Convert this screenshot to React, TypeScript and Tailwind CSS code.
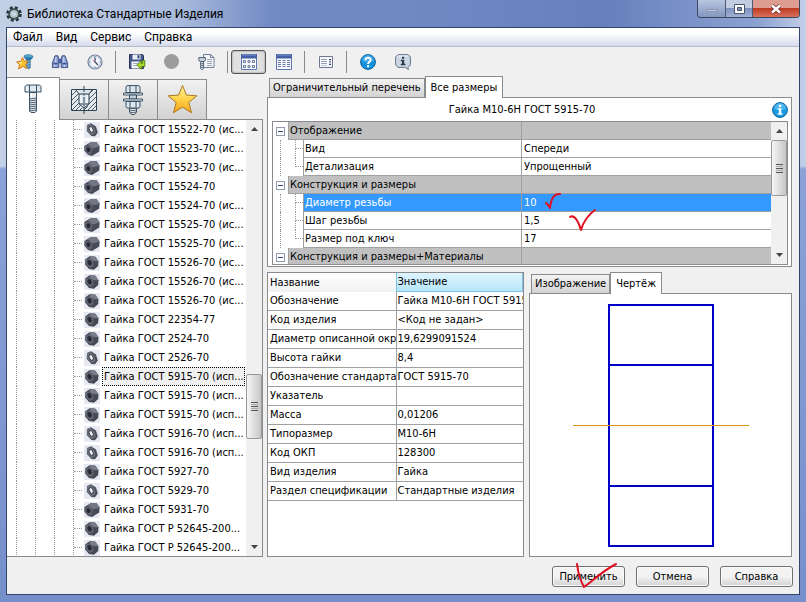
import { useState } from "react";
import type { ReactNode } from "react";
import clsx from "clsx";

type NutKind = "thin" | "normal" | "thick";

const NUTS: { name: string; kind: NutKind }[] = [
  { name: "Гайка ГОСТ 15522-70 (ис...", kind: "thin" },
  { name: "Гайка ГОСТ 15523-70 (ис...", kind: "thick" },
  { name: "Гайка ГОСТ 15523-70 (ис...", kind: "thick" },
  { name: "Гайка ГОСТ 15524-70", kind: "thick" },
  { name: "Гайка ГОСТ 15524-70 (ис...", kind: "thick" },
  { name: "Гайка ГОСТ 15525-70 (ис...", kind: "thick" },
  { name: "Гайка ГОСТ 15525-70 (ис...", kind: "thick" },
  { name: "Гайка ГОСТ 15526-70 (ис...", kind: "normal" },
  { name: "Гайка ГОСТ 15526-70 (ис...", kind: "normal" },
  { name: "Гайка ГОСТ 15526-70 (ис...", kind: "normal" },
  { name: "Гайка ГОСТ 22354-77", kind: "normal" },
  { name: "Гайка ГОСТ 2524-70", kind: "normal" },
  { name: "Гайка ГОСТ 2526-70", kind: "thin" },
  { name: "Гайка ГОСТ 5915-70 (исп...", kind: "normal" },
  { name: "Гайка ГОСТ 5915-70 (исп...", kind: "normal" },
  { name: "Гайка ГОСТ 5915-70 (исп...", kind: "normal" },
  { name: "Гайка ГОСТ 5916-70 (исп...", kind: "thin" },
  { name: "Гайка ГОСТ 5916-70 (исп...", kind: "thin" },
  { name: "Гайка ГОСТ 5927-70", kind: "normal" },
  { name: "Гайка ГОСТ 5929-70", kind: "thin" },
  { name: "Гайка ГОСТ 5931-70", kind: "thick" },
  { name: "Гайка ГОСТ Р 52645-200...", kind: "normal" },
  { name: "Гайка ГОСТ Р 52645-200...", kind: "normal" },
];

const DETAILS = [
  ["Обозначение", "Гайка М10-6Н ГОСТ 5915"],
  ["Код изделия", "<Код не задан>"],
  ["Диаметр описанной окру", "19,6299091524"],
  ["Высота гайки", "8,4"],
  ["Обозначение стандарта", "ГОСТ 5915-70"],
  ["Указатель", ""],
  ["Масса", "0,01206"],
  ["Типоразмер", "М10-6Н"],
  ["Код ОКП", "128300"],
  ["Вид изделия", "Гайка"],
  ["Раздел спецификации", "Стандартные изделия"],
];

type Prop = { name: string; value?: string; group?: boolean; last?: boolean };

const PROPS: Prop[] = [
  { name: "Отображение", group: true },
  { name: "Вид", value: "Спереди" },
  { name: "Детализация", value: "Упрощенный", last: true },
  { name: "Конструкция и размеры", group: true },
  { name: "Диаметр резьбы", value: "10" },
  { name: "Шаг резьбы", value: "1,5" },
  { name: "Размер под ключ", value: "17", last: true },
  { name: "Конструкция и размеры+Материалы", group: true },
];

function GearIcon() {
  return (
    <svg width="16" height="16" viewBox="0 0 16 16">
      <circle cx="8" cy="8" r="6.4" fill="none" stroke="#263238" strokeWidth="2.8" strokeDasharray="2.9 2.13" />
      <circle cx="8" cy="8" r="4.8" fill="#e8f0f0" stroke="#3d4f55" strokeWidth="2" />
      <circle cx="8" cy="8" r="2.8" fill="#c9d6ea" stroke="#8b9da3" strokeWidth="0.6" />
    </svg>
  );
}

function NutIcon({ kind }: { kind: NutKind }) {
  return (
    <svg width="16" height="16" viewBox="0 0 16 16" className="shrink-0 bg-[#e6e8f2]">
      {kind === "thin" && (
        <>
          <path d="M3 3 7 1.2 12 4.6 13.8 10.4 11 14.2 7.4 14 2.8 9Z" fill="#4a4c58" />
          <path d="M3 3.2 6.6 2 10.6 5.6 11.4 11 8 13.2 3.4 9Z" fill="#6c6f7d" />
          <ellipse cx="7.2" cy="7.5" rx="1.9" ry="3" transform="rotate(-25 7.2 7.5)" fill="#eef0f6" stroke="#454752" />
        </>
      )}
      {kind === "normal" && (
        <>
          <path d="M1.4 4.2 6 1 11.4 1.8 14.4 6.2 14.2 11 10 14.8 5 14 1.2 9.6Z" fill="#464854" />
          <path d="M6 1 11.4 1.8 14.4 6.2 9.8 6.2 5.5 3.4Z" fill="#787b88" />
          <path d="M1.6 4.6 5.5 3.4 9.2 6.6 9.4 11 6 13 1.8 9.2Z" fill="#646774" />
          <ellipse cx="5.6" cy="7.8" rx="2.1" ry="2.7" transform="rotate(-25 5.6 7.8)" fill="#292a35" />
        </>
      )}
      {kind === "thick" && (
        <>
          <path d="M.4 5 7 1 12.4 1 15.6 5.4 15.2 10.6 8 15 3.8 13.8 .4 9.8Z" fill="#484a56" />
          <path d="M3.6 3 7.6 1 12.4 1 15.6 5.4 9 7.6 5.4 4.4Z" fill="#747784" />
          <path d="M.8 5.4 5.4 4.6 8.6 8 7.6 12.8 4 13.2 .8 9.4Z" fill="#60636f" />
          <ellipse cx="4.4" cy="8.6" rx="1.9" ry="2.4" transform="rotate(-25 4.4 8.6)" fill="#262732" />
        </>
      )}
    </svg>
  );
}

function StarBoltIcon() {
  return (
    <svg width="18" height="18" viewBox="0 0 18 18">
      <path d="M8 3.2C8 1.4 16.6 1 17 3.6L15.4 6.2H9.6Z" fill="#2c86b8" stroke="#1e5f8c" strokeWidth=".6" />
      <path d="M9 3h7" stroke="#7cc5e6" strokeWidth="1" />
      <path d="M10.6 6h3.8v8.4l-1.8 1.6-2-1.8Z" fill="#3d7fae" stroke="#285a80" strokeWidth=".5" />
      <path d="m10.6 9 3.8-1M10.6 11.4l3.8-1M10.6 13.6l3.8-1" stroke="#b9dcf0" strokeWidth=".7" />
      <path d="m6.6 4.4 1.7 3.8 4.1.1-3 2.8 1.3 4.4-3.9-2.1L2.6 16l.9-4.4L.6 8.9l4.2-.6Z" fill="#ffc52e" stroke="#c8701a" strokeWidth=".9" />
      <path d="M6.5 6.6 5.5 9l-2.5.6 2 1.8Z" fill="#fff0a0" />
    </svg>
  );
}

function BinocularsIcon() {
  return (
    <svg width="18" height="16" viewBox="0 0 18 16">
      <path d="M4 1.8h3l.8 3.4v8.4H1.4V9.2Z" fill="#8b9cd0" stroke="#40538f" />
      <path d="M14 1.8h-3l-.8 3.4v8.4h6.4V9.2Z" fill="#8b9cd0" stroke="#40538f" />
      <path d="M7.8 5h2.4v4H7.8Z" fill="#5367a5" stroke="#40538f" strokeWidth=".6" />
      <path d="M2.4 9.6h4.2M11.4 9.6h4.2" stroke="#40538f" strokeWidth="1.2" />
      <path d="M3.6 11v2M4.8 3.2v5M12.8 3.2v5M13.4 11v2" stroke="#dde4f8" />
    </svg>
  );
}

function ClockIcon() {
  return (
    <svg width="16" height="16" viewBox="0 0 16 16">
      <circle cx="8" cy="8" r="7" fill="#fff" stroke="#6d7f9b" strokeWidth="1.2" />
      <circle cx="8" cy="8" r="5.6" fill="#f2f6fc" stroke="#b4c0d2" strokeWidth="1" />
      <path d="M8 3.4V8l3 3" fill="none" stroke="#31435f" strokeWidth="1.2" />
      <path d="M8 8 5.6 6" stroke="#d04848" strokeWidth=".8" />
      <path d="M8 2.6v1M8 12.4v1M2.6 8h1M12.4 8h1" stroke="#6d7f9b" />
    </svg>
  );
}

function SaveIcon() {
  return (
    <svg width="18" height="18" viewBox="0 0 18 18">
      <path d="M1.5 1.5h13l1 1v13h-14Z" fill="#46598c" stroke="#26345f" />
      <path d="M4.5 1.5h8v5h-8Z" fill="#e8edf6" />
      <path d="M9.6 2.2h1.8v3.2H9.6Z" fill="#26345f" />
      <path d="M3.5 8.5h10v7h-10Z" fill="#f8fafd" />
      <path d="M5 10.5h5M5 12.5h4" stroke="#9aa8c4" />
      <path d="M16.8 7.4v6.2h-3.6v2.6L8.8 12l4.4-4.2v2.6h1.2v-3Z" fill="#a9d92a" stroke="#4d7d0d" strokeWidth=".9" />
    </svg>
  );
}

function ReportIcon() {
  return (
    <svg width="18" height="18" viewBox="0 0 18 18">
      <path d="M5.5 1.5h7l3.5 3v10H5.5Z" fill="#f4f6fa" stroke="#70809a" />
      <path d="M12.5 1.5v3H16" fill="none" stroke="#70809a" />
      <path d="M9 6.5h5M9 8.5h5M9 10.5h5M9 12.5h5" stroke="#97a4b8" />
      <path d="M.8 4.5h6.6v3l-1.2 1H2l-1.2-1Z" fill="#c5cdd8" stroke="#48566a" strokeWidth=".9" />
      <path d="M2.6 8.5h3v7l-1.5 1.4-1.5-1.4Z" fill="#dce1e8" stroke="#48566a" strokeWidth=".8" />
      <path d="m2.6 11 3-1M2.6 13l3-1M2.6 15l3-1" stroke="#48566a" strokeWidth=".8" />
    </svg>
  );
}

function WindowIcon({ boxes }: { boxes?: boolean }) {
  return (
    <svg width="16" height="16" viewBox="0 0 16 16">
      <path d="M.5.5h15v15H.5Z" fill="#f6f9fe" stroke="#6078b0" />
      <path d="M0 0h16v4.5H0Z" fill="#4560a4" />
      <path d="M1 1h14" stroke="#7e95cc" />
      {boxes ? (
        <path
          d="M2.5 6.5h2v2h-2zM7 6.5h2v2H7zM11.5 6.5h2v2h-2zM2.5 11.5h2v2h-2zM7 11.5h2v2H7zM11.5 11.5h2v2h-2z"
          fill="#fff"
          stroke="#5a6b94"
          strokeWidth=".9"
        />
      ) : (
        <path d="M2 6.5h12M2 8.5h12M2 10.5h12M2 12.5h12" stroke="#6b7da8" strokeDasharray="3 1.5" />
      )}
    </svg>
  );
}

function CardIcon() {
  return (
    <svg width="14" height="12" viewBox="0 0 14 12">
      <path d="M.5.5h13v11H.5Z" fill="#f8f9fc" stroke="#6d7890" />
      <path d="M2 3.5h6M2 5.5h6M2 7.5h6" stroke="#98a2b6" />
      <path d="M10 3h2v1.2h-2zM10 5.4h2v1.2h-2zM10 7.8h2V9h-2z" fill="#3b4a72" />
      <path d="M2 9.5h6" stroke="#c2c8d4" />
    </svg>
  );
}

function HelpIcon() {
  return (
    <svg width="16" height="16" viewBox="0 0 16 16">
      <circle cx="8" cy="8" r="7.4" fill="#1592dc" stroke="#0a5f9e" strokeWidth="1" />
      <path d="M2 7a6 6 0 0 1 12 0q-6 2.6-12 0Z" fill="#58bdf0" opacity=".6" />
      <path d="M5.6 6.2C5.6 3 10.6 3 10.5 6.1 10.4 7.8 8.1 7.9 8.1 10" fill="none" stroke="#fff" strokeWidth="2" />
      <path d="M7 11.2h2.2v2H7Z" fill="#fff" />
    </svg>
  );
}

function InfoBubbleIcon() {
  return (
    <svg width="16" height="16" viewBox="0 0 16 16">
      <path d="M3 .6h10L15.4 3v8L13 13.4h0l.4 2.2-3-2.2H3L.6 11V3Z" fill="#ccd6e2" stroke="#66778c" />
      <path d="M2 3.4 3.6 2h9" fill="none" stroke="#f4f7fa" />
      <path d="M7 2.8h2.2v2H7ZM5.8 5.8h3.4v4h1.2v1.4H5.8V9.8H7V7.2H5.8Z" fill="#2d3a4c" />
    </svg>
  );
}

function InfoIcon() {
  return (
    <svg width="16" height="16" viewBox="0 0 16 16">
      <circle cx="8" cy="8" r="7.4" fill="#1a9be4" stroke="#0b5f98" strokeWidth="1" />
      <path d="M2 7a6 6 0 0 1 12 0q-6 2.6-12 0Z" fill="#6cc8f4" opacity=".6" />
      <path d="M6.9 2.8h2.4v2.2H6.9ZM5.8 6.2h3.5v5h1.2v1.6H5.7v-1.6h1.2V7.8H5.8Z" fill="#fff" />
    </svg>
  );
}

function BoltIcon() {
  return (
    <svg width="18" height="30" viewBox="0 0 18 30">
      <path d="M1 2.5 2.5 1h13L17 2.5V8H1Z" fill="#dfe7ef" stroke="#3b5062" />
      <path d="M5.5 1v7M12.5 1v7" stroke="#3b5062" />
      <path d="M5.5 8.5h7V27L11 28.5H7L5.5 27Z" fill="#e9eef3" stroke="#3b5062" />
      <path d="m5.5 15 7-1M5.5 17l7-1M5.5 19l7-1M5.5 21l7-1M5.5 23l7-1M5.5 25l7-1M5.5 27l7-1" stroke="#4d5f6e" />
      <path d="M7.5 9v4M3 3v4" stroke="#fff" />
    </svg>
  );
}

function HoleIcon() {
  return (
    <svg width="26" height="28" viewBox="0 0 26 28">
      <path d="M.5 3.5h25v21H.5Z" fill="#e6ebef" />
      <path
        d="m1 9 5-5M1 14l7-7M1 19l7-7M1 24l7-7M5 24l4-4M9 24l2-2M17 24l8-8M21 24l4-4M18 18l7-7M18 13l7-7M13 24l4-4M19 7l3-3"
        fill="none"
        stroke="#455868"
      />
      <path d="M.5 3.5h25v21H.5Z" fill="none" stroke="#2f4250" />
      <path d="M4.5 3.5h17L18 8v10l-5 4-5-4V8Z" fill="#dde6ee" stroke="#2f4250" />
      <path d="M8 8h10M8 18h10" stroke="#2f4250" />
      <path d="M10 9v8M16 9v8" stroke="#fff" />
      <path d="M13 0v28" stroke="#2f4250" strokeDasharray="6 1.5 2 1.5" />
    </svg>
  );
}

function BoltNutIcon() {
  return (
    <svg width="22" height="30" viewBox="0 0 22 30">
      <path d="M7.5 13h7v14l-2 2.5h-3l-2-2.5Z" fill="#e9eef3" stroke="#3b5062" />
      <path d="m7.5 24 7-1M7.5 26l7-1M8 28l6-1" stroke="#4d5f6e" />
      <path d="M4 2l1-1.4h12L18 2v5.5H4Z" fill="#dfe7ef" stroke="#3b5062" />
      <path d="M8 .6v7M14 .6v7M8 13v3M14 13v3" stroke="#3b5062" />
      <path d="M1.5 8h19v2h-19Z" fill="#f7f9fb" stroke="#3b5062" />
      <path d="M7.5 10h7v4h-7Z" fill="#c4d0da" stroke="#3b5062" />
      <path d="M1.5 14h19v2h-19Z" fill="#f7f9fb" stroke="#3b5062" />
      <path d="M4 16.5h14v5L17 23H5l-1-1.5Z" fill="#dfe7ef" stroke="#3b5062" />
      <path d="M8 17v5.5M14 17v5.5" stroke="#3b5062" />
    </svg>
  );
}

function StarIcon() {
  return (
    <svg width="31" height="31" viewBox="0 0 32 32">
      <defs>
        <linearGradient id="gold" x1="0" y1="0" x2="0" y2="1">
          <stop offset="0" stopColor="#fff3a0" />
          <stop offset=".5" stopColor="#ffd34a" />
          <stop offset="1" stopColor="#f5a21a" />
        </linearGradient>
      </defs>
      <path d="m16 1.5 4 9.9 10.8.8-8.3 6.8 2.8 10.7L16 23.9l-9.3 5.8 2.8-10.7-8.3-6.8 10.800-.8Z" fill="url(#gold)" stroke="#a8761c" />
    </svg>
  );
}

function Tick({ d, className, width, height }: { d: string; className: string; width: number; height: number }) {
  return (
    <svg width={width} height={height} viewBox={`0 0 ${width} ${height}`} className={clsx("absolute pointer-events-none z-10", className)}>
      <path d={d} fill="none" stroke="#e01020" strokeWidth="2" strokeLinecap="round" strokeLinejoin="round" />
    </svg>
  );
}

function ArrowButton({ up }: { up?: boolean }) {
  return (
    <button type="button" aria-label={up ? "Вверх" : "Вниз"} className="flex h-[18px] shrink-0 items-center justify-center">
      <svg width="7" height="4" viewBox="0 0 7 4">
        <path d={up ? "M0 4h7L3.5 0Z" : "M0 0h7L3.5 4Z"} fill="#444" />
      </svg>
    </button>
  );
}

function ScrollBar({ before, size, after }: { before: string; size: string; after: string }) {
  return (
    <div className="flex w-4 shrink-0 flex-col bg-[#f0f0f0]">
      <ArrowButton up />
      <div className={before} />
      <div
        className={clsx(
          "flex shrink-0 flex-col items-center justify-center gap-px rounded-[2px] border border-[#999] bg-linear-to-r from-[#f6f6f6] to-[#c6c6c8]",
          size,
        )}
      >
        <span className="h-px w-[7px] bg-[#555]" />
        <span className="h-px w-[7px] bg-[#aaa]" />
        <span className="h-px w-[7px] bg-[#555]" />
        <span className="h-px w-[7px] bg-[#aaa]" />
        <span className="h-px w-[7px] bg-[#555]" />
      </div>
      <div className={after} />
      <ArrowButton />
    </div>
  );
}

function ToolButton({ label, pressed, children }: { label: string; pressed?: boolean; children: ReactNode }) {
  return (
    <button
      type="button"
      aria-label={label}
      aria-pressed={pressed}
      className={clsx(
        "flex h-6 w-[35px] items-center justify-center rounded-[3px]",
        pressed && "border border-[#555] bg-[#e0e0e0] shadow-[inset_0_0_2px_#777]",
      )}
    >
      {children}
    </button>
  );
}

function Divider() {
  return <span className="mx-[3px] h-[22px] w-px bg-[#8a8a8a]" />;
}

function IconTab({ label, active, onClick, children }: { label: string; active: boolean; onClick: () => void; children: ReactNode }) {
  return (
    <button
      type="button"
      role="tab"
      aria-label={label}
      aria-selected={active}
      onClick={onClick}
      className={clsx(
        "flex items-center justify-center border-t border-r border-[#8a8a8f]",
        active ? "h-[43px] w-[53px] bg-white" : "mb-px h-10 w-[49px] bg-linear-to-b from-[#f2f2f2] to-[#d2d2d2]",
      )}
    >
      {children}
    </button>
  );
}

function TextTab({ active, onClick, children }: { active: boolean; onClick: () => void; children: ReactNode }) {
  return (
    <button
      type="button"
      role="tab"
      aria-selected={active}
      onClick={onClick}
      className={clsx(
        "border border-b-0 border-[#8a8a8f]",
        active ? "relative -mb-px h-[22px] bg-white px-[5px]" : "h-[19px] bg-linear-to-b from-[#f3f3f3] to-[#d3d3d3] px-[3px]",
      )}
    >
      {children}
    </button>
  );
}

function DialogButton({ children }: { children: ReactNode }) {
  return (
    <button
      type="button"
      className="relative h-[21px] w-[73px] rounded-[3px] border border-[#707070] bg-linear-to-b from-[#f3f3f3] from-50% to-[#d2d2d2] shadow-[inset_0_0_0_1px_#fafafa]"
    >
      {children}
    </button>
  );
}

function TitleBar() {
  return (
    <header className="flex h-[27px] shrink-0 items-start justify-between">
      <div className="flex h-[27px] items-center gap-[5px]">
        <GearIcon />
        <h1 className="font-['Roboto','Noto_Sans',sans-serif] text-[12px]">Библиотека Стандартные Изделия</h1>
      </div>
      <div className="flex h-[18px] overflow-hidden rounded-b-[4px] border border-t-0 border-[#3b4660]">
        <button type="button" aria-label="Свернуть" className="flex w-7 items-center justify-center border-r border-[#4d5a78] bg-linear-to-b from-[#b9c6e0] to-[#8396c0]">
          <span className="mt-1 h-[3px] w-3 border border-[#8794b0] bg-[#c4cde0]" />
        </button>
        <button type="button" aria-label="Развернуть" className="flex w-[27px] items-center justify-center border-r border-[#4d5a78] bg-linear-to-b from-[#c2cde4] from-45% via-[#7f93bf] via-50% to-[#9fb0d6]">
          <svg width="11" height="10" viewBox="0 0 11 10">
            <path d="M.5.5h10v9H.5Z" fill="#fff" stroke="#485268" />
            <path d="M3.5 3.5h4v3h-4Z" fill="#7d90b8" stroke="#485268" />
          </svg>
        </button>
        <button type="button" aria-label="Закрыть" className="flex w-[46px] items-center justify-center bg-linear-to-b from-[#dd9d90] from-45% via-[#bf3a22] via-50% to-[#d8705a]">
          <svg width="12" height="10" viewBox="0 0 12 10">
            <path d="m2 1.5 8 7M10 1.5l-8 7" stroke="#5a3030" strokeWidth="4" />
            <path d="m2 1.5 8 7M10 1.5l-8 7" stroke="#fff" strokeWidth="2.5" />
          </svg>
        </button>
      </div>
    </header>
  );
}

function NutTree() {
  const [selected, setSelected] = useState(13);

  return (
    <div className="flex min-h-0 flex-1 border border-l-0 border-[#8a8a8f] bg-white">
      <ul role="tree" className="min-w-0 flex-1 overflow-hidden">
        {NUTS.map((nut, i) => (
          <li
            key={i}
            role="treeitem"
            aria-selected={i === selected}
            onClick={() => setSelected(i)}
            className="flex h-[19px] items-center pl-[9px]"
          >
            <span className="h-full w-[19px] shrink-0 border-l border-dotted border-[#999]" />
            <span className="h-full w-[19px] shrink-0 border-l border-dotted border-[#999]" />
            <span className="h-full w-[19px] shrink-0 border-l border-dotted border-[#999]" />
            <span className="flex h-full w-[11px] shrink-0 items-center border-l border-dotted border-[#999]">
              <span className="w-2 border-t border-dotted border-[#999]" />
            </span>
            <NutIcon kind={nut.kind} />
            <span
              className={clsx(
                "ml-0.5 flex h-full items-center border px-px whitespace-nowrap",
                i === selected ? "w-[143px] border-dotted border-black bg-[#f0f0f0]" : "border-transparent",
              )}
            >
              {nut.name}
            </span>
          </li>
        ))}
      </ul>
      <ScrollBar before="flex-[236]" size="h-[65px]" after="flex-[99]" />
    </div>
  );
}

function PropertyGrid() {
  const [selected, setSelected] = useState(4);

  return (
    <div className="flex h-36 overflow-hidden border border-[#8a8a8f]">
      <div className="min-w-0 flex-1 overflow-hidden">
        <table className="w-full table-fixed border-separate border-spacing-0">
          <colgroup>
            <col className="w-[15px]" />
            <col className="w-[15px]" />
            <col className="w-[218px]" />
            <col />
          </colgroup>
          <tbody>
            {PROPS.map((prop, i) =>
              prop.group ? (
                <tr key={i} className="h-[18px]">
                  <td className="h-[18px] p-0">
                    <button type="button" aria-label="Свернуть группу" className="ml-[3px] flex size-[9px] items-center justify-center border border-[#8f9bb0] bg-white">
                      <span className="h-px w-[5px] bg-[#33447a]" />
                    </button>
                  </td>
                  <th colSpan={2} className="border-b border-l border-[#a0a0a0] bg-[#c0c0c0] p-0 pl-px text-left font-normal whitespace-nowrap">
                    {prop.name}
                  </th>
                  <td className="border-b border-l border-[#a0a0a0] bg-[#c0c0c0] p-0" />
                </tr>
              ) : (
                <tr key={i} onClick={() => setSelected(i)} className={clsx("h-[18px]", i === selected && "text-white")}>
                  <td className="h-[18px] p-0">
                    <div className="ml-[7px] h-[18px] border-l border-dotted border-[#999]" />
                  </td>
                  <td className="p-0">
                    <div className="ml-[7px] h-[18px]">
                      <div className="h-[9px] border-b border-l border-dotted border-[#999]" />
                      {!prop.last && <div className="h-[9px] border-l border-dotted border-[#999]" />}
                    </div>
                  </td>
                  <th
                    className={clsx(
                      "border-b border-l border-[#a0a0a0] p-0 pl-px text-left font-normal whitespace-nowrap",
                      i === selected && "bg-[#3399ff]",
                    )}
                  >
                    {prop.name}
                  </th>
                  <td className={clsx("relative border-b border-l border-[#a0a0a0] p-0 pl-0.5", i === selected && "bg-[#3399ff]")}>
                    {prop.value}
                    {prop.value === "10" && <Tick width={18} height={20} className="-top-0.5 left-[22px]" d="M16 2C10 1 7 7 6 16 5 14 4 12 2 11" />}
                    {prop.value === "1,5" && <Tick width={30} height={26} className="-top-1 left-[46px]" d="M2 9C7 6 11 15 13 22 15 14 21 6 27 2" />}
                  </td>
                </tr>
              ),
            )}
          </tbody>
        </table>
      </div>
      <ScrollBar before="h-0" size="h-[56px]" after="flex-1" />
    </div>
  );
}

function SizesPanel() {
  const [tab, setTab] = useState(1);

  return (
    <section>
      <div role="tablist" className="flex items-end px-0.5">
        <TextTab active={tab === 0} onClick={() => setTab(0)}>Ограничительный перечень</TextTab>
        <TextTab active={tab === 1} onClick={() => setTab(1)}>Все размеры</TextTab>
      </div>
      <div className="border border-[#8a8a8f] bg-white pr-[3px] pb-px pl-1">
        <div className="flex h-[23px] items-center">
          <p className="flex-1 text-center">Гайка М10-6Н ГОСТ 5915-70</p>
          <button type="button" aria-label="Сведения">
            <InfoIcon />
          </button>
        </div>
        <PropertyGrid />
      </div>
    </section>
  );
}

function DetailsTable() {
  return (
    <div className="w-[257px] shrink-0 overflow-hidden border border-[#8a8a8f] bg-white">
      <table className="w-full table-fixed border-separate border-spacing-0">
        <thead>
          <tr className="h-[19px]">
            <th className="h-[19px] bg-linear-to-b from-white to-[#f0f1f3] p-0 pl-0.5 text-left font-normal">Название</th>
            <th className="border border-t-0 border-[#7cc4e4] bg-linear-to-b from-[#dff5fe] to-[#b6e6fb] p-0 pl-px text-left font-normal">Значение</th>
          </tr>
        </thead>
        <tbody>
          {DETAILS.map(([name, value]) => (
            <tr key={name} className="h-[19px]">
              <td className="h-[19px] overflow-hidden border-b border-[#a0a0a0] p-0 pl-0.5 whitespace-nowrap">{name}</td>
              <td className="overflow-hidden border-b border-l border-[#a0a0a0] p-0 pl-px whitespace-nowrap">{value}</td>
            </tr>
          ))}
        </tbody>
      </table>
    </div>
  );
}

function DrawingPanel() {
  const [tab, setTab] = useState(1);

  return (
    <section className="flex flex-1 flex-col">
      <div role="tablist" className="flex items-end px-0.5">
        <TextTab active={tab === 0} onClick={() => setTab(0)}>Изображение</TextTab>
        <TextTab active={tab === 1} onClick={() => setTab(1)}>Чертёж</TextTab>
      </div>
      <div className="flex flex-1 items-center justify-center border border-[#8a8a8f] bg-white">
        <svg width="176" height="243" viewBox="0 0 176 243" shapeRendering="crispEdges">
          <path d="M36 1h104v241H36ZM36 61h104M36 182h104" fill="none" stroke="#0000c8" strokeWidth="2" />
          <path d="M0 121h176v1H0Z" fill="#d8940c" />
        </svg>
      </div>
    </section>
  );
}

export default function App() {
  const [category, setCategory] = useState(0);

  return (
    <div className="flex h-screen flex-col overflow-hidden bg-[linear-gradient(to_bottom,transparent_166px,#8aa2d8_169px,#7690cc_100%),linear-gradient(to_right,#c3d0e6_0%,#a9bbdc_22%,#7189c4_34%,#6f88c4_55%,#6680be_75%,#8ba1d0_94%,#c3cfe8_100%)] px-1.5 pb-[7px] font-['DejaVu_Sans_Condensed','Noto_Sans',sans-serif] text-[11px] leading-[14px] text-black">
      <TitleBar />
      <main className="flex min-h-0 flex-1 flex-col border border-[#33456b] bg-[#f0f0f0]">
        <nav className="flex h-[19px] shrink-0 items-center gap-[13px] border-b border-[#b4bccc] bg-linear-to-b from-white from-30% to-[#d5daeb] px-1.5 font-['Roboto','Noto_Sans',sans-serif] text-[12px]">
          <button type="button">Файл</button>
          <button type="button">Вид</button>
          <button type="button">Сервис</button>
          <button type="button">Справка</button>
        </nav>
        <div role="toolbar" className="flex h-[29px] shrink-0 items-center">
          <ToolButton label="В избранное"><StarBoltIcon /></ToolButton>
          <ToolButton label="Поиск"><BinocularsIcon /></ToolButton>
          <ToolButton label="Журнал"><ClockIcon /></ToolButton>
          <Divider />
          <ToolButton label="Сохранить"><SaveIcon /></ToolButton>
          <ToolButton label="Остановить">
            <span className="size-[15px] rounded-full bg-[#9c9c9c]" />
          </ToolButton>
          <ToolButton label="Отчёт"><ReportIcon /></ToolButton>
          <Divider />
          <ToolButton label="Значки" pressed><WindowIcon boxes /></ToolButton>
          <ToolButton label="Список"><WindowIcon /></ToolButton>
          <Divider />
          <ToolButton label="Карточка"><CardIcon /></ToolButton>
          <Divider />
          <ToolButton label="Справка"><HelpIcon /></ToolButton>
          <ToolButton label="О программе"><InfoBubbleIcon /></ToolButton>
        </div>
        <div className="flex min-h-0 flex-1 gap-1 pr-[7px]">
          <aside className="flex w-[256px] shrink-0 flex-col pt-px">
            <div role="tablist" className="relative -mb-px flex items-end">
              <IconTab label="Крепёж" active={category === 0} onClick={() => setCategory(0)}><BoltIcon /></IconTab>
              <IconTab label="Отверстия" active={category === 1} onClick={() => setCategory(1)}><HoleIcon /></IconTab>
              <IconTab label="Соединения" active={category === 2} onClick={() => setCategory(2)}><BoltNutIcon /></IconTab>
              <IconTab label="Избранное" active={category === 3} onClick={() => setCategory(3)}><StarIcon /></IconTab>
            </div>
            <NutTree />
          </aside>
          <div className="flex min-w-0 flex-1 flex-col gap-[5px]">
            <SizesPanel />
            <div className="flex min-h-0 flex-1 gap-[5px]">
              <DetailsTable />
              <DrawingPanel />
            </div>
          </div>
        </div>
        <footer className="flex h-[37px] shrink-0 items-center justify-end gap-[11px] pt-0.5 pr-1.5">
          <DialogButton>
            Применить
            <Tick width={44} height={28} className="-top-[5px] left-[22px]" d="M2 2C3 10 5 18 9 25 16 21 24 11 41 2" />
          </DialogButton>
          <DialogButton>Отмена</DialogButton>
          <DialogButton>Справка</DialogButton>
        </footer>
      </main>
    </div>
  );
}
